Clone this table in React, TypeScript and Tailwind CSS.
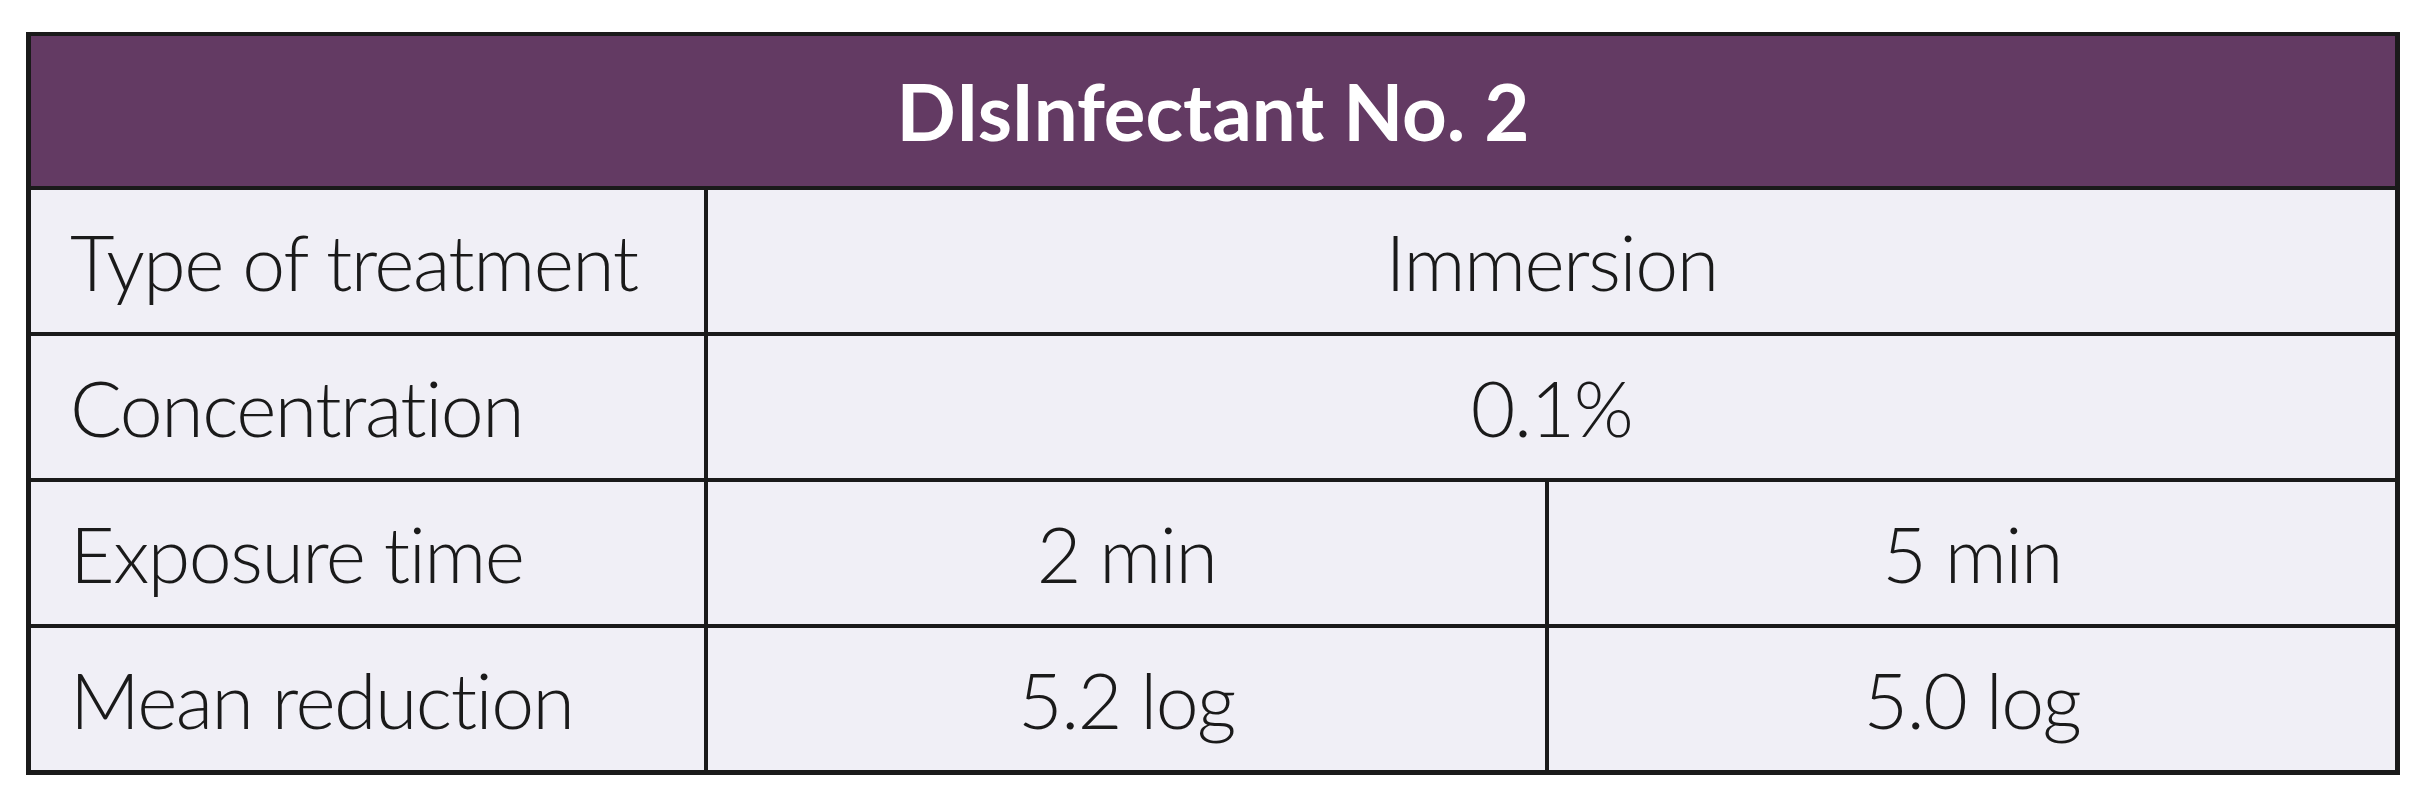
const rows = [
  { label: "Type of treatment", values: ["Immersion"] },
  { label: "Concentration", values: ["0.1%"] },
  { label: "Exposure time", values: ["2 min", "5 min"] },
  { label: "Mean reduction", values: ["5.2 log", "5.0 log"] },
]

export default function App() {
  return (
    <div className="min-h-screen bg-white pl-[26px] pt-[32px] font-['Lato','Liberation_Sans',sans-serif] [font-variant-ligatures:none]">
      <div className="w-[2374px] border-[5px] border-t-[4px] border-[#1a1a1a] bg-[#f0eff6]">
        <div className="flex h-[150px] items-center justify-center bg-[#633a63] text-[78px] font-bold leading-none text-white">
          DIsInfectant No. 2
        </div>
        {rows.map((row) => (
          <div key={row.label} className="flex h-[146px] border-t-[4px] border-[#1a1a1a] text-[77px] font-light leading-none tracking-[-1.5px] text-[#1a1a1a]">
            <div className="flex w-[677px] items-center border-r-[4px] border-[#1a1a1a] pl-[39px]">
              {row.label}
            </div>
            {row.values.length === 1 ? (
              <div className="flex flex-1 items-center justify-center">{row.values[0]}</div>
            ) : (
              <>
                <div className="flex w-[841px] items-center justify-center border-r-[4px] border-[#1a1a1a]">
                  {row.values[0]}
                </div>
                <div className="flex flex-1 items-center justify-center">{row.values[1]}</div>
              </>
            )}
          </div>
        ))}
      </div>
    </div>
  )
}
